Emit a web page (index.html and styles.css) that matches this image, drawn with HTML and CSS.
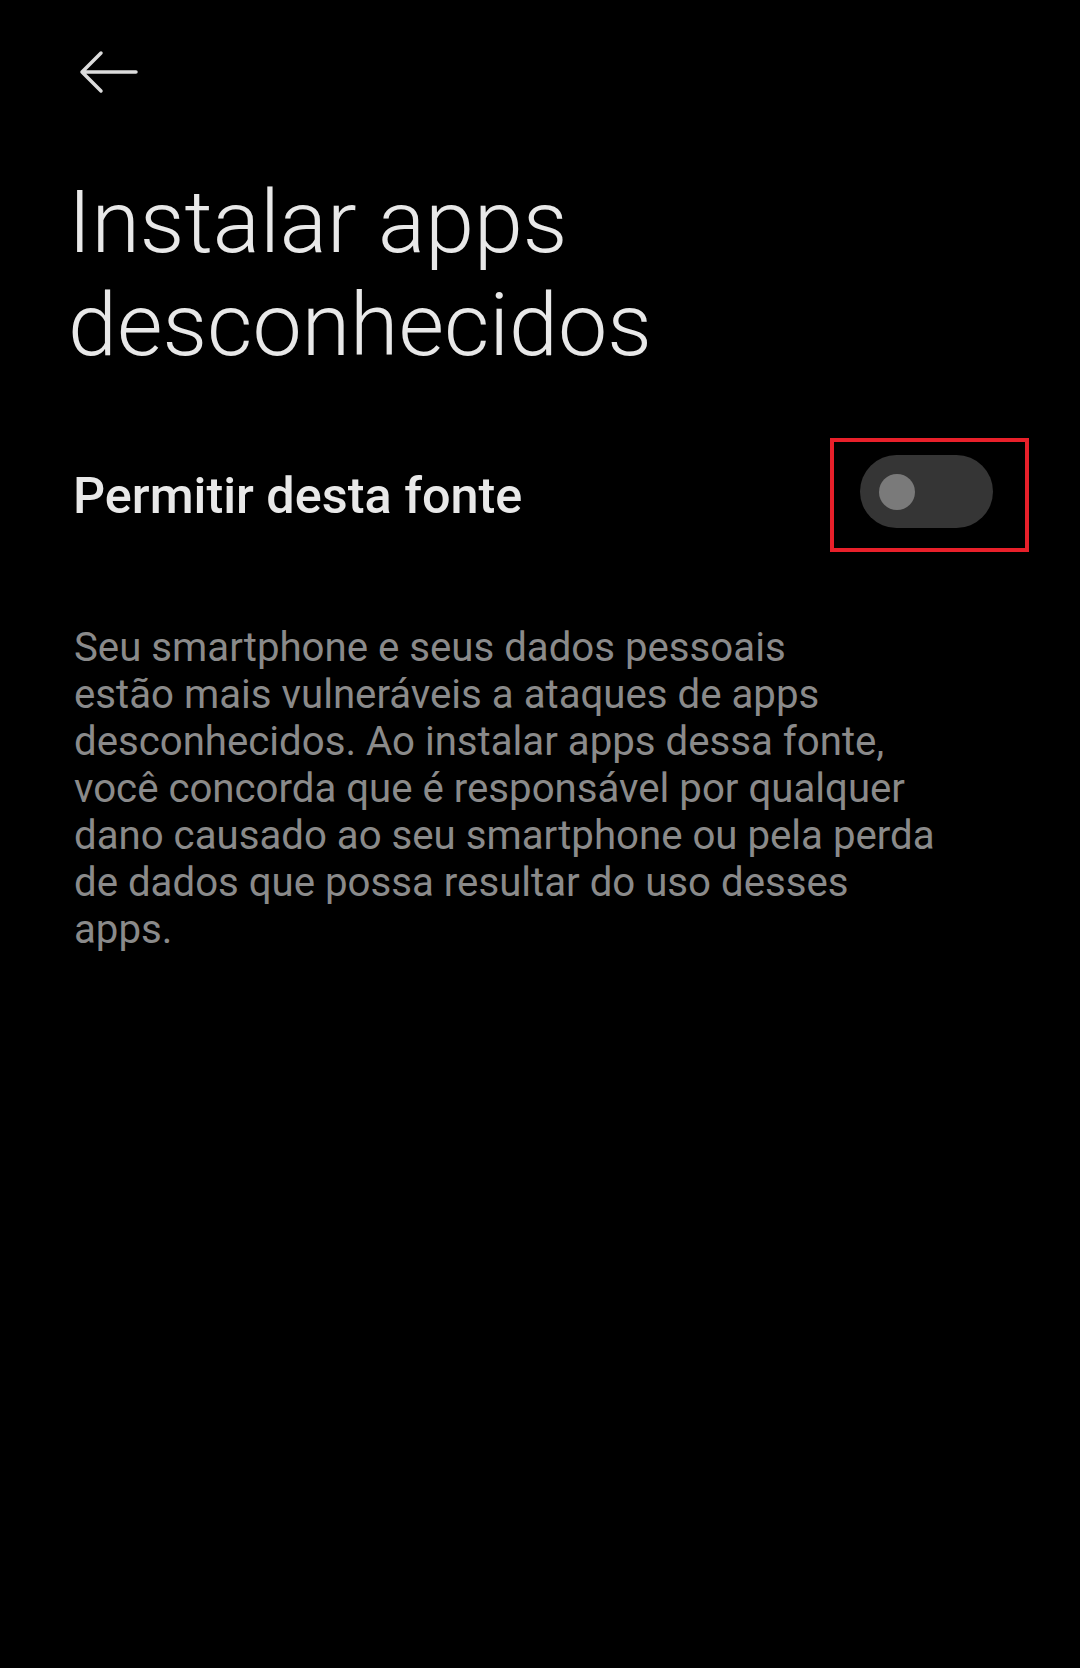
FILE: index.html
```html
<!DOCTYPE html>
<html lang="pt">
<head>
<meta charset="utf-8">
<title>Instalar apps desconhecidos</title>
<link rel="stylesheet" href="styles.css">
</head>
<body>
<div class="screen">
  <header class="topbar">
    <svg class="back" width="60" height="44" viewBox="0 0 60 44" aria-label="Voltar">
      <path d="M3 22 H57 M22 3 L3 22 L22 41" fill="none" stroke="#dcdcdc" stroke-width="3.5" stroke-linecap="round" stroke-linejoin="round"/>
    </svg>
  </header>
  <h1 class="title">Instalar apps<br>desconhecidos</h1>
  <div class="row">
    <div class="row-label">Permitir desta fonte</div>
    <div class="highlight">
      <div class="toggle"><div class="knob"></div></div>
    </div>
  </div>
  <p class="desc">Seu smartphone e seus dados pessoais<br>estão mais vulneráveis a ataques de apps<br>desconhecidos. Ao instalar apps dessa fonte,<br>você concorda que é responsável por qualquer<br>dano causado ao seu smartphone ou pela perda<br>de dados que possa resultar do uso desses<br>apps.</p>
</div>
</body>
</html>
```
FILE: styles.css
```css
html, body {
  margin: 0;
  padding: 0;
  background: #000;
}
.screen {
  width: 1080px;
  height: 1668px;
  background: #000;
  font-family: Roboto, "Noto Sans", sans-serif;
  box-sizing: border-box;
}
.topbar {
  height: 170px;
  padding: 50px 0 0 79px;
  box-sizing: border-box;
}
.back {
  display: block;
}
.title {
  margin: 0;
  padding-left: 68px;
  font-size: 88px;
  line-height: 103px;
  font-weight: 300;
  color: #e8e8e8;
}
.row {
  margin-top: 62px;
  display: flex;
  justify-content: space-between;
  align-items: flex-start;
  padding-left: 73px;
  padding-right: 51px;
}
.row-label {
  padding-top: 28px;
  font-size: 50.4px;
  line-height: 60px;
  font-weight: 500;
  color: #e8e8e8;
}
.highlight {
  border: 4px solid #e8202a;
  padding: 13px 32px 20px 26px;
}
.toggle {
  width: 133px;
  height: 73px;
  border-radius: 37px;
  background: #353535;
  display: flex;
  align-items: center;
  padding-left: 19px;
  box-sizing: border-box;
}
.knob {
  width: 36px;
  height: 36px;
  border-radius: 50%;
  background: #7a7a7a;
}
.desc {
  margin: 72px 0 0;
  padding-left: 74px;
  font-size: 40.2px;
  line-height: 47px;
  color: #8a8a8a;
}
```
